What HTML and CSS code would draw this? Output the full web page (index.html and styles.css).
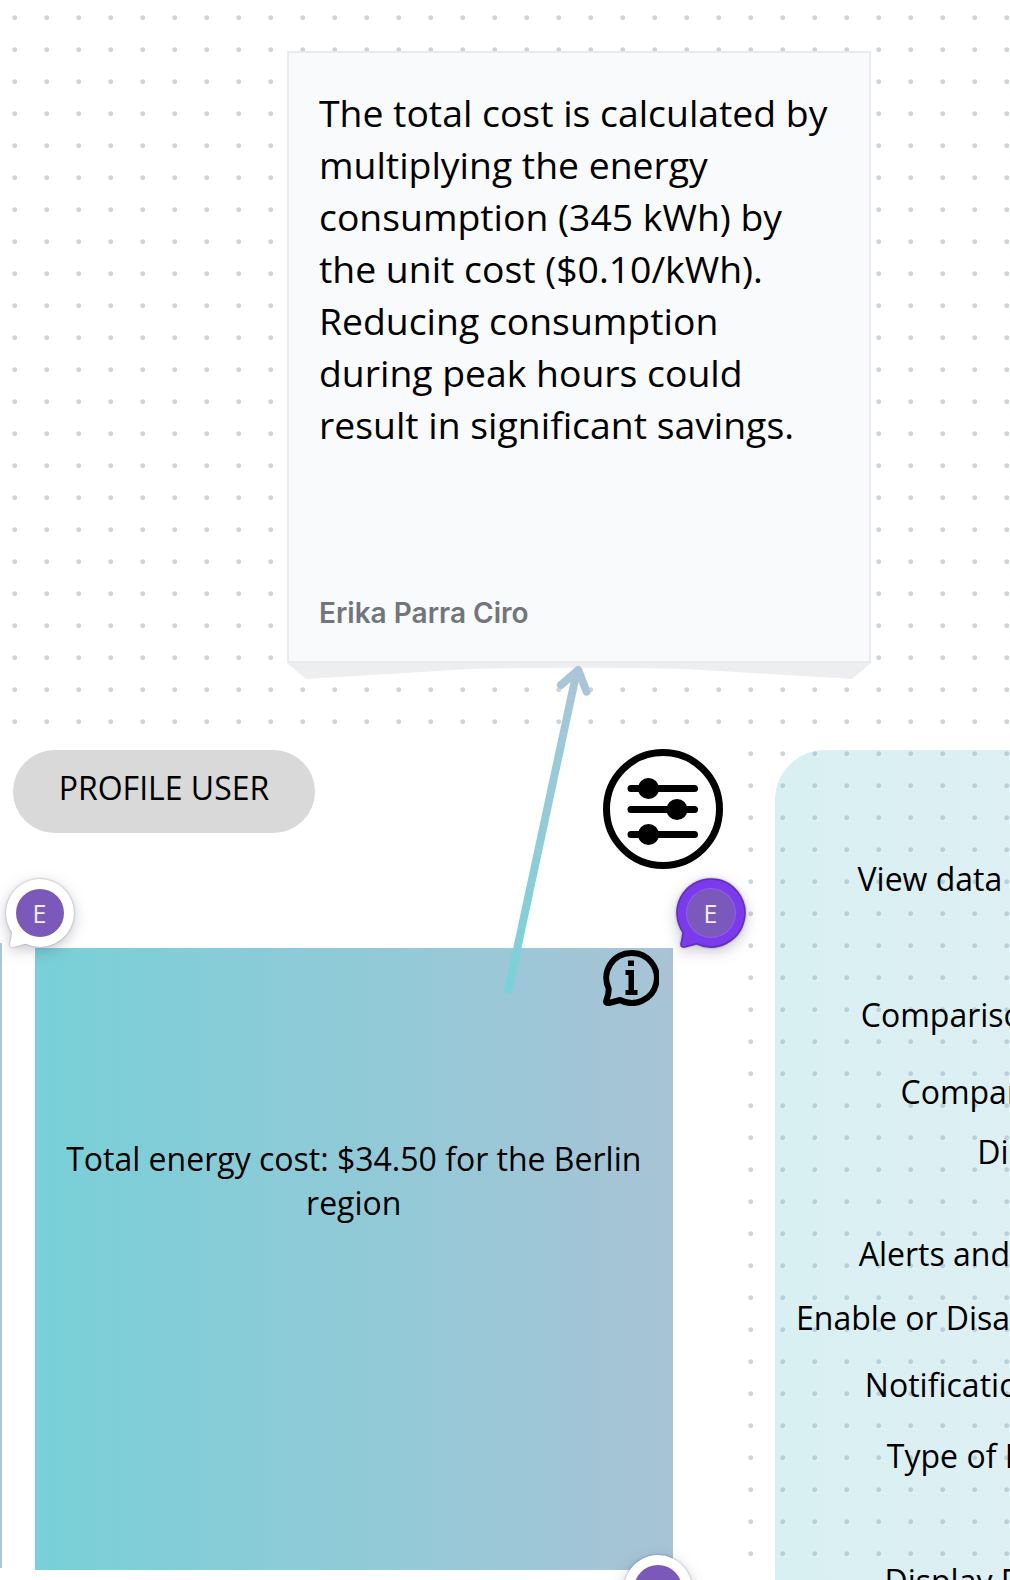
FILE: index.html
```html
<!DOCTYPE html>
<html lang="en">
<head>
  <meta charset="UTF-8" />
  <title>Energy dashboard board</title>
  <link rel="stylesheet" href="styles.css">
</head>
<body>
  <div class="board">
    <div class="note">
      <p class="note-text">The total cost is calculated by multiplying the energy consumption (345 kWh) by the unit cost ($0.10/kWh). Reducing consumption during peak hours could result in significant savings.</p>
      <div class="note-author">Erika Parra Ciro</div>
      <svg class="note-fold" viewBox="0 0 584 16" preserveAspectRatio="none">
        <path d="M0 0H584L565 16L400 6Q292 3.500 184 6L19 16Z"/>
      </svg>
    </div>

    <div class="settings-panel">
      <div class="row row-view">View data by day, week or month</div>
      <div class="row row-comparison">Comparison with prior periods</div>
      <div class="row row-compare">Compare to other regions</div>
      <div class="row row-display">Display changes</div>
      <div class="row row-alerts">Alerts and notifications settings:</div>
      <div class="row row-enable">Enable or Disable alerts for peak demand</div>
      <div class="row row-notif">Notifications via email or in-app</div>
      <div class="row row-type">Type of Report: Day or Month</div>
      <div class="row row-format">Display Format: Chart or List</div>
    </div>

    <div class="frame">
      <div class="edge"></div>
      <div class="pill">PROFILE USER</div>

      <svg class="sliders" viewBox="0 0 120 120">
        <circle cx="60" cy="60" r="56.500" fill="#fff" stroke="#000" stroke-width="7"/>
        <path d="M28 39.500H91.500M28 60.500H91.500M28 85.500H91.500" stroke="#000" stroke-width="7" stroke-linecap="round"/>
        <circle cx="45.500" cy="39.500" r="10.500"/>
        <circle cx="74" cy="60.500" r="10.500"/>
        <circle cx="45.500" cy="85.500" r="10.500"/>
      </svg>

      <div class="cost-box">
        Total energy cost: $34.50 for the Berlin region
        <svg class="info-icon" viewBox="0 0 56 56">
          <path d="M28 3A25 25 0 1 1 17 50Q10 52 6 53Q2 53.500 3.500 50Q6 44 5.600 38.600A25 25 0 0 1 28 3Z" fill="none" stroke="#000" stroke-width="6" stroke-linejoin="round"/>
          <rect x="25" y="10.500" width="6" height="5.500"/>
          <path d="M22.500 20H31V40H34.500V45H22.500V40H25.500V25H22.500Z"/>
        </svg>
      </div>

      <div class="pin pin-left">
        <svg class="pin-shape" viewBox="0 0 68 68"><path d="M34 0A34 34 0 1 1 19.500 64.800Q13 66.500 7.500 68Q3.500 68.500 4 65Q5.500 59 6 53.300A34 34 0 0 1 34 0Z"/></svg>
        <span class="pin-avatar">E</span>
      </div>
      <div class="pin pin-active">
        <svg class="pin-shape" viewBox="0 0 68 68"><path d="M34 0A34 34 0 1 1 19.500 64.800Q13 66.500 7.500 68Q3.500 68.500 4 65Q5.500 59 6 53.300A34 34 0 0 1 34 0Z"/></svg>
        <span class="pin-avatar">E</span>
      </div>
      <div class="pin pin-bottom">
        <svg class="pin-shape" viewBox="0 0 68 68"><path d="M34 0A34 34 0 1 1 19.500 64.800Q13 66.500 7.500 68Q3.500 68.500 4 65Q5.500 59 6 53.300A34 34 0 0 1 34 0Z"/></svg>
        <span class="pin-avatar">E</span>
      </div>
    </div>

    <svg class="arrow" viewBox="0 0 110 345">
      <defs>
        <linearGradient id="arrow-fade" gradientUnits="userSpaceOnUse" x1="18" y1="338" x2="88" y2="13">
          <stop offset="0" stop-color="#78d2d9"/>
          <stop offset="1" stop-color="#a8c6d7"/>
        </linearGradient>
      </defs>
      <path d="M17.700 337.700L86 20" fill="none" stroke="url(#arrow-fade)" stroke-width="8"/>
      <path d="M71 30L88.300 15L96.500 36.700" fill="none" stroke="#a8c6d7" stroke-width="8" stroke-linecap="round" stroke-linejoin="round"/>
    </svg>
  </div>
</body>
</html>
```

FILE: styles.css
```css
html, body {
  margin: 0;
  padding: 0;
}
body {
  font-family: 'Open Sans', sans-serif;
  color: #000;
  background: #fff;
}
.board {
  position: relative;
  width: 1010px;
  height: 1580px;
  overflow: hidden;
  background-color: #fff;
  background-image: radial-gradient(circle at 14.7px 17.7px, #cdd3dc 2px, transparent 2.7px);
  background-size: 32px 32px;
}

/* sticky note */
.note {
  position: absolute;
  left: 287px;
  top: 51px;
  width: 584px;
  height: 612px;
  box-sizing: border-box;
  padding: 34px 30px 32px 30px;
  display: flex;
  flex-direction: column;
  justify-content: space-between;
  background: #f9fafc;
  border: 2px solid #e9ebef;
}
.note-text {
  margin: 0;
  font-size: 37.33px;
  line-height: 52px;
}
.note-author {
  font-family: 'Inter', sans-serif;
  font-weight: 600;
  font-size: 28px;
  line-height: 32px;
  color: #72757b;
}
.note-fold {
  position: absolute;
  left: -2px;
  bottom: -18px;
  width: 584px;
  height: 16px;
  fill: #edeef0;
}

/* right panel */
.settings-panel {
  position: absolute;
  left: 775px;
  top: 750px;
  width: 650px;
  height: 1000px;
  box-sizing: border-box;
  padding-top: 107px;
  border-radius: 50px;
  background: linear-gradient(90deg, rgba(116, 201, 212, 0.28), rgba(168, 196, 214, 0.28));
  text-align: center;
  font-size: 32px;
  line-height: 44px;
}
.row-view { padding-left: 8px; }
.row-comparison { margin-top: 92px; padding-right: 22px; }
.row-compare { margin-top: 33px; padding-right: 14px; }
.row-display { margin-top: 16px; padding-right: 6px; }
.row-alerts { margin-top: 58px; padding-right: 6px; }
.row-enable { margin-top: 20px; padding-left: 8px; }
.row-notif { margin-top: 23px; padding-left: 2px; }
.row-type { margin-top: 27px; padding-left: 14px; }
.row-format { margin-top: 81px; padding-right: 8px; }

/* white frame */
.frame {
  position: absolute;
  left: 0;
  top: 735px;
  width: 738px;
  height: 845px;
  box-sizing: border-box;
  padding: 15px 0 0 13px;
  background: #fff;
}
.edge {
  position: absolute;
  left: 0;
  top: 208px;
  width: 2px;
  height: 625px;
  background: #a8c8da;
}
.pill {
  width: 302px;
  height: 83px;
  box-sizing: border-box;
  padding-bottom: 8px;
  display: flex;
  align-items: center;
  justify-content: center;
  border-radius: 42px;
  background: #d9d9d9;
  font-size: 32px;
}
.sliders {
  position: absolute;
  left: 603px;
  top: 14px;
  width: 120px;
  height: 120px;
}
.cost-box {
  position: relative;
  margin: 115px 0 0 21.500px;
  width: 638.500px;
  height: 622px;
  box-sizing: border-box;
  padding: 189px 24px 0;
  background: linear-gradient(90deg, #78d0d8, #a8c4d6);
  text-align: center;
  font-size: 32px;
  line-height: 44px;
}
.info-icon {
  position: absolute;
  right: 14px;
  top: 2px;
  width: 56px;
  height: 56px;
}

/* comment pins */
.pin {
  position: absolute;
  width: 68px;
  height: 68px;
}
.pin-shape {
  position: absolute;
  left: 0;
  top: 0;
  width: 68px;
  height: 68px;
  overflow: visible;
  fill: #fff;
  filter: drop-shadow(0 0 1px rgba(60, 60, 90, 0.45)) drop-shadow(0 4px 7px rgba(40, 40, 70, 0.25));
}
.pin-avatar {
  position: absolute;
  left: 10px;
  top: 10px;
  width: 48px;
  height: 48px;
  display: flex;
  align-items: center;
  justify-content: center;
  border-radius: 50%;
  background: #7a59bb;
  color: #f1ecfa;
  font-size: 25px;
}
.pin-left {
  left: 5.500px;
  top: 144px;
}
.pin-active {
  left: 676.500px;
  top: 144px;
}
.pin-active .pin-shape {
  fill: #7c3aed;
  stroke: #5f2fb5;
  stroke-width: 1.500px;
}
.pin-active .pin-avatar {
  box-shadow: 0 0 0 1px rgba(255, 255, 255, 0.18);
}
.pin-bottom {
  left: 624px;
  top: 820px;
}

.arrow {
  position: absolute;
  left: 490px;
  top: 655px;
  width: 110px;
  height: 345px;
}
```
